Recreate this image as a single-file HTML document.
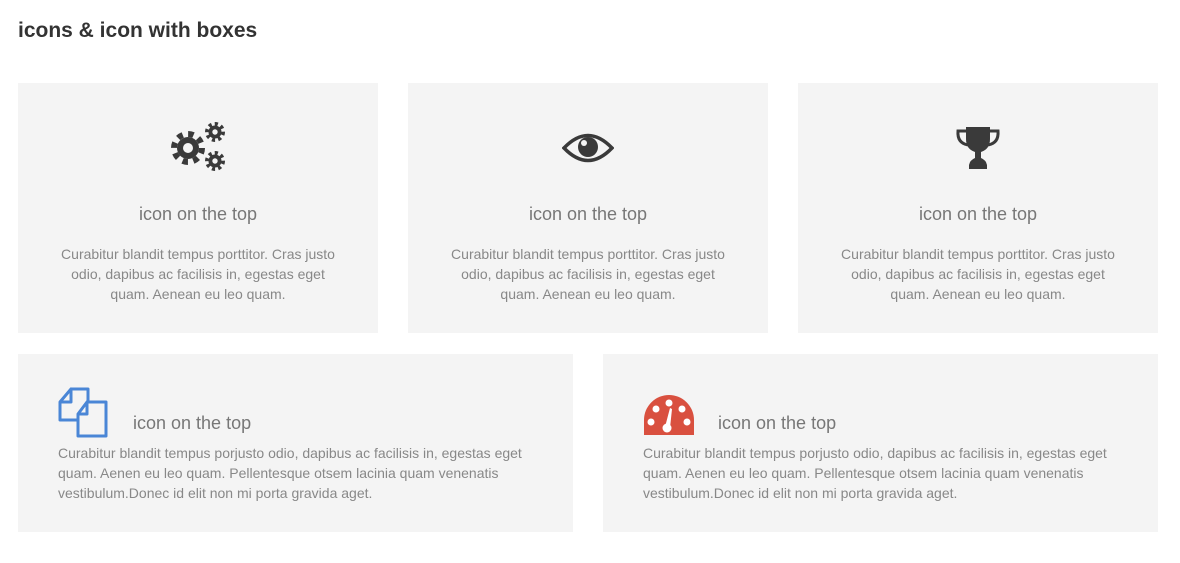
<!DOCTYPE html>
<html><head><meta charset="utf-8"><style>
body{margin:0;background:#fff;font-family:"Liberation Sans",Arial,sans-serif;width:1180px;height:563px;position:relative;overflow:hidden}
h1{position:absolute;left:18px;top:19px;margin:0;font-size:21px;font-weight:bold;color:#333}
.box{position:absolute;background:#f4f4f4}
.h{position:absolute;font-size:18px;color:#777;white-space:nowrap}
.p{position:absolute;font-size:14px;line-height:20px;color:#888}
.c{text-align:center;left:0;right:0}
svg{position:absolute}
</style></head><body>
<h1>icons &amp; icon with boxes</h1>

<div class="box" style="left:18px;top:83px;width:360px;height:250px">
<svg style="left:150px;top:37px" width="60" height="55" viewBox="0 0 60 55">
<g fill="#3a3a3a">
<circle cx="20" cy="28" r="11"/>
<circle cx="20" cy="28" r="14" fill="none" stroke="#3a3a3a" stroke-width="6" stroke-dasharray="5.5 5.5"/>
<circle cx="20" cy="28" r="5" fill="#f4f4f4"/>
<circle cx="47" cy="12" r="6.5"/>
<circle cx="47" cy="12" r="8" fill="none" stroke="#3a3a3a" stroke-width="4" stroke-dasharray="3.1 3.1"/>
<circle cx="47" cy="12" r="2.7" fill="#f4f4f4"/>
<circle cx="47" cy="41" r="6.5"/>
<circle cx="47" cy="41" r="8" fill="none" stroke="#3a3a3a" stroke-width="4" stroke-dasharray="3.1 3.1"/>
<circle cx="47" cy="41" r="2.7" fill="#f4f4f4"/>
</g></svg>
<div class="h c" style="top:121px">icon on the top</div>
<div class="p c" style="top:161px;padding:0 35px">Curabitur blandit tempus porttitor. Cras justo odio, dapibus ac facilisis in, egestas eget quam. Aenean eu leo quam.</div>
</div>

<div class="box" style="left:408px;top:83px;width:360px;height:250px">
<svg style="left:154px;top:48px" width="52" height="34" viewBox="0 0 52 34">
<path d="M2 17 Q26 -8 50 17 Q26 42 2 17Z" fill="none" stroke="#3a3a3a" stroke-width="3.5"/>
<circle cx="26" cy="16" r="10" fill="#3a3a3a"/>
<circle cx="22" cy="12" r="3" fill="#f4f4f4"/>
</svg>
<div class="h c" style="top:121px">icon on the top</div>
<div class="p c" style="top:161px;padding:0 35px">Curabitur blandit tempus porttitor. Cras justo odio, dapibus ac facilisis in, egestas eget quam. Aenean eu leo quam.</div>
</div>

<div class="box" style="left:798px;top:83px;width:360px;height:250px">
<svg style="left:155px;top:42px" width="50" height="46" viewBox="0 0 50 46">
<path d="M13 2H37V14Q37 24 28 27V33Q33 35 34 40V44H16V40Q17 35 22 33V27Q13 24 13 14Z" fill="#3a3a3a"/>
<path d="M13 6H5Q4 18 15 20M37 6H45Q46 18 35 20" fill="none" stroke="#3a3a3a" stroke-width="3"/>
</svg>
<div class="h c" style="top:121px">icon on the top</div>
<div class="p c" style="top:161px;padding:0 35px">Curabitur blandit tempus porttitor. Cras justo odio, dapibus ac facilisis in, egestas eget quam. Aenean eu leo quam.</div>
</div>

<div class="box" style="left:18px;top:354px;width:555px;height:178px">
<svg style="left:40px;top:33px" width="52" height="52" viewBox="0 0 52 52">
<g fill="none" stroke="#4a86d6" stroke-width="3" stroke-linejoin="round">
<path d="M13 2H30V15M20 33H2V15L13 2V15H2"/>
<path d="M29 15H48V49H20V27L29 15V27H20"/>
</g></svg>
<div class="h" style="left:115px;top:59px">icon on the top</div>
<div class="p" style="left:40px;top:89px;width:495px">Curabitur blandit tempus porjusto odio, dapibus ac facilisis in, egestas eget quam. Aenen eu leo quam. Pellentesque otsem lacinia quam venenatis vestibulum.Donec id elit non mi porta gravida aget.</div>
</div>

<div class="box" style="left:603px;top:354px;width:555px;height:178px">
<svg style="left:40px;top:40px" width="52" height="42" viewBox="0 0 52 42">
<path d="M1 41V26A25 25 0 0 1 51 26V41Z" fill="#d9503f"/>
<g fill="#fff"><circle cx="26" cy="9" r="3.5"/><circle cx="13" cy="15" r="3.5"/><circle cx="39" cy="15" r="3.5"/><circle cx="8" cy="28" r="3.5"/><circle cx="44" cy="28" r="3.5"/>
<circle cx="24" cy="34" r="4.5"/><path d="M22 33L27 14L29 15L27 34Z"/></g>
</svg>
<div class="h" style="left:115px;top:59px">icon on the top</div>
<div class="p" style="left:40px;top:89px;width:495px">Curabitur blandit tempus porjusto odio, dapibus ac facilisis in, egestas eget quam. Aenen eu leo quam. Pellentesque otsem lacinia quam venenatis vestibulum.Donec id elit non mi porta gravida aget.</div>
</div>
</body></html>
